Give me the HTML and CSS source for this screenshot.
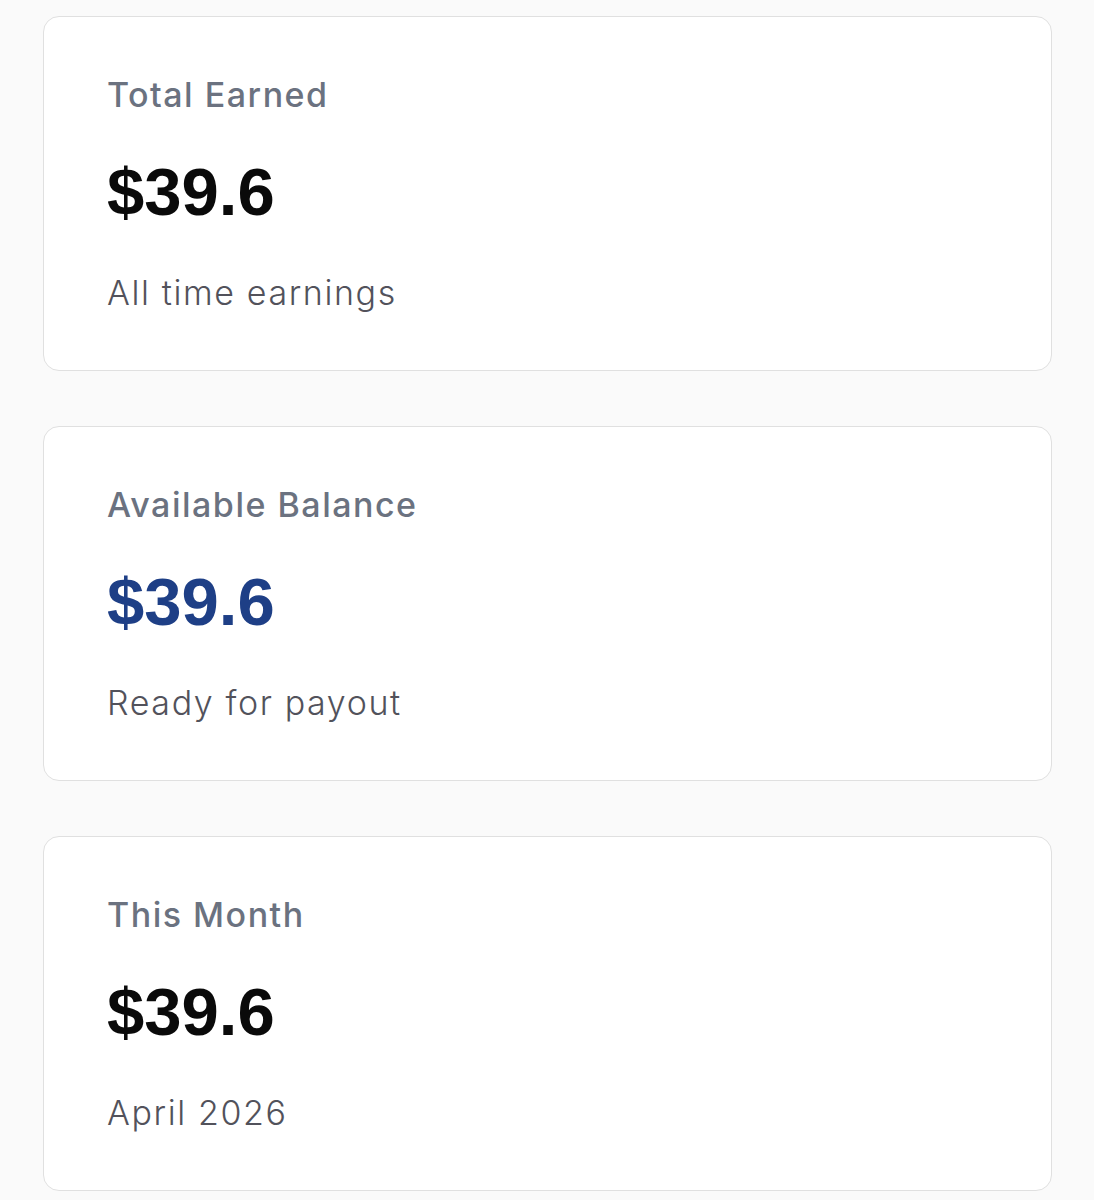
FILE: index.html
```html
<!DOCTYPE html>
<html lang="en">
<head>
  <meta charset="UTF-8" />
  <title>Earnings</title>
  <link rel="stylesheet" href="styles.css">
</head>
<body>
  <main class="stats">
    <div class="stat-card">
      <div class="stat-label">Total Earned</div>
      <div class="stat-value">$39.6</div>
      <div class="stat-note">All time earnings</div>
    </div>
    <div class="stat-card">
      <div class="stat-label">Available Balance</div>
      <div class="stat-value blue">$39.6</div>
      <div class="stat-note">Ready for payout</div>
    </div>
    <div class="stat-card">
      <div class="stat-label">This Month</div>
      <div class="stat-value">$39.6</div>
      <div class="stat-note">April 2026</div>
    </div>
  </main>
</body>
</html>
```

FILE: styles.css
```css
body {
  margin: 0;
  font-family: 'Inter', sans-serif;
  background-color: #fafafa;
  color: #0a0a0a;
}
.stats {
  display: flex;
  flex-direction: column;
  gap: 55px;
  padding: 16px 42px 0 43px;
}
.stat-card {
  background: #fff;
  border: 1px solid #e0e0e0;
  border-radius: 16px;
  padding: 58px 63px 57px;
}
.stat-label {
  font-size: 34px;
  line-height: 40px;
  font-weight: 500;
  color: #6b7280;
  letter-spacing: 1.5px;
}
.stat-value {
  margin-top: 39px;
  font-family: 'Liberation Sans', Arial, sans-serif;
  font-size: 67px;
  line-height: 76px;
  font-weight: bold;
  color: #0a0a0a;
}
.stat-value.blue {
  color: #1e3f86;
}
.stat-note {
  margin-top: 43px;
  font-size: 34px;
  line-height: 40px;
  font-weight: 300;
  color: #52525b;
  letter-spacing: 1.6px;
}
```
